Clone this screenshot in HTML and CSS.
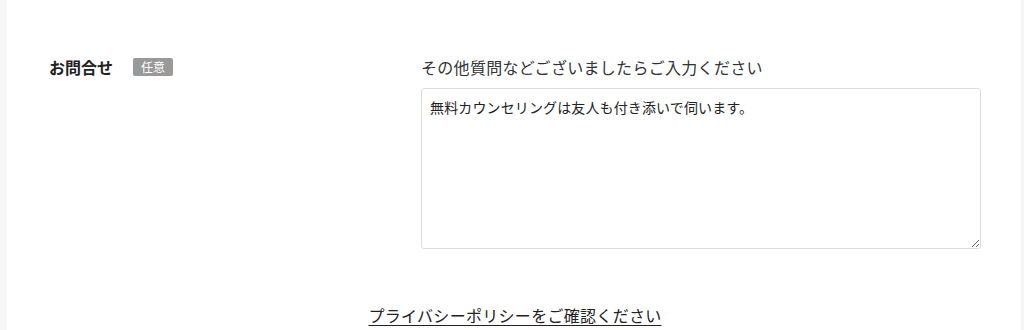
FILE: index.html
```html
<!DOCTYPE html>
<html lang="ja">
<head>
<meta charset="utf-8">
<link rel="stylesheet" href="styles.css">
</head>
<body>
<div class="page">
  <div class="row">
    <div class="head">
      <span class="label">お問合せ</span>
      <span class="badge">任意</span>
    </div>
    <div class="field">
      <p class="hint">その他質問などございましたらご入力ください</p>
      <textarea class="area">無料カウンセリングは友人も付き添いで伺います。</textarea>
    </div>
  </div>
  <div class="policy">
    <a class="policy-link" href="#">プライバシーポリシーをご確認ください</a>
  </div>
</div>
</body>
</html>
```
FILE: styles.css
```css
html, body {
  margin: 0;
  padding: 0;
  background: #f7f7f8;
  height: 100%;
}
body {
  font-family: "Noto Sans CJK JP", "Noto Sans", sans-serif;
  color: #333;
}
.page {
  background: #fff;
  margin-left: 7px;
  width: 1014px;
  min-height: 330px;
  box-sizing: border-box;
  padding: 55px 40px 0 42px;
}
.row {
  display: grid;
  grid-template-columns: 372px 560px;
}
.head {
  display: flex;
  align-items: center;
  height: 24px;
  gap: 20px;
}
.label {
  font-size: 16px;
  font-weight: 700;
  line-height: 24px;
  color: #222;
}
.badge {
  background: #999;
  color: #fff;
  font-size: 12px;
  line-height: 18px;
  height: 18px;
  padding: 0 8px;
  border-radius: 2px;
}
.field {
  display: flex;
  flex-direction: column;
}
.hint {
  margin: 0 0 9px;
  font-size: 16px;
  line-height: 24px;
  letter-spacing: 0.3px;
  color: #333;
}
.area {
  width: 560px;
  height: 161px;
  box-sizing: border-box;
  border: 1px solid #ddd;
  border-radius: 3px;
  padding: 6px 8px;
  font-family: "Noto Sans CJK JP", "Noto Sans", sans-serif;
  font-size: 14px;
  line-height: 24px;
  letter-spacing: 0.13px;
  color: #222;
  resize: vertical;
  margin: 0;
}
.policy {
  display: flex;
  justify-content: center;
  margin-top: 54px;
}
.policy-link {
  font-size: 16px;
  line-height: 24px;
  letter-spacing: 0.3px;
  color: #222;
  text-decoration: underline;
  text-underline-offset: 3px;
}
```
